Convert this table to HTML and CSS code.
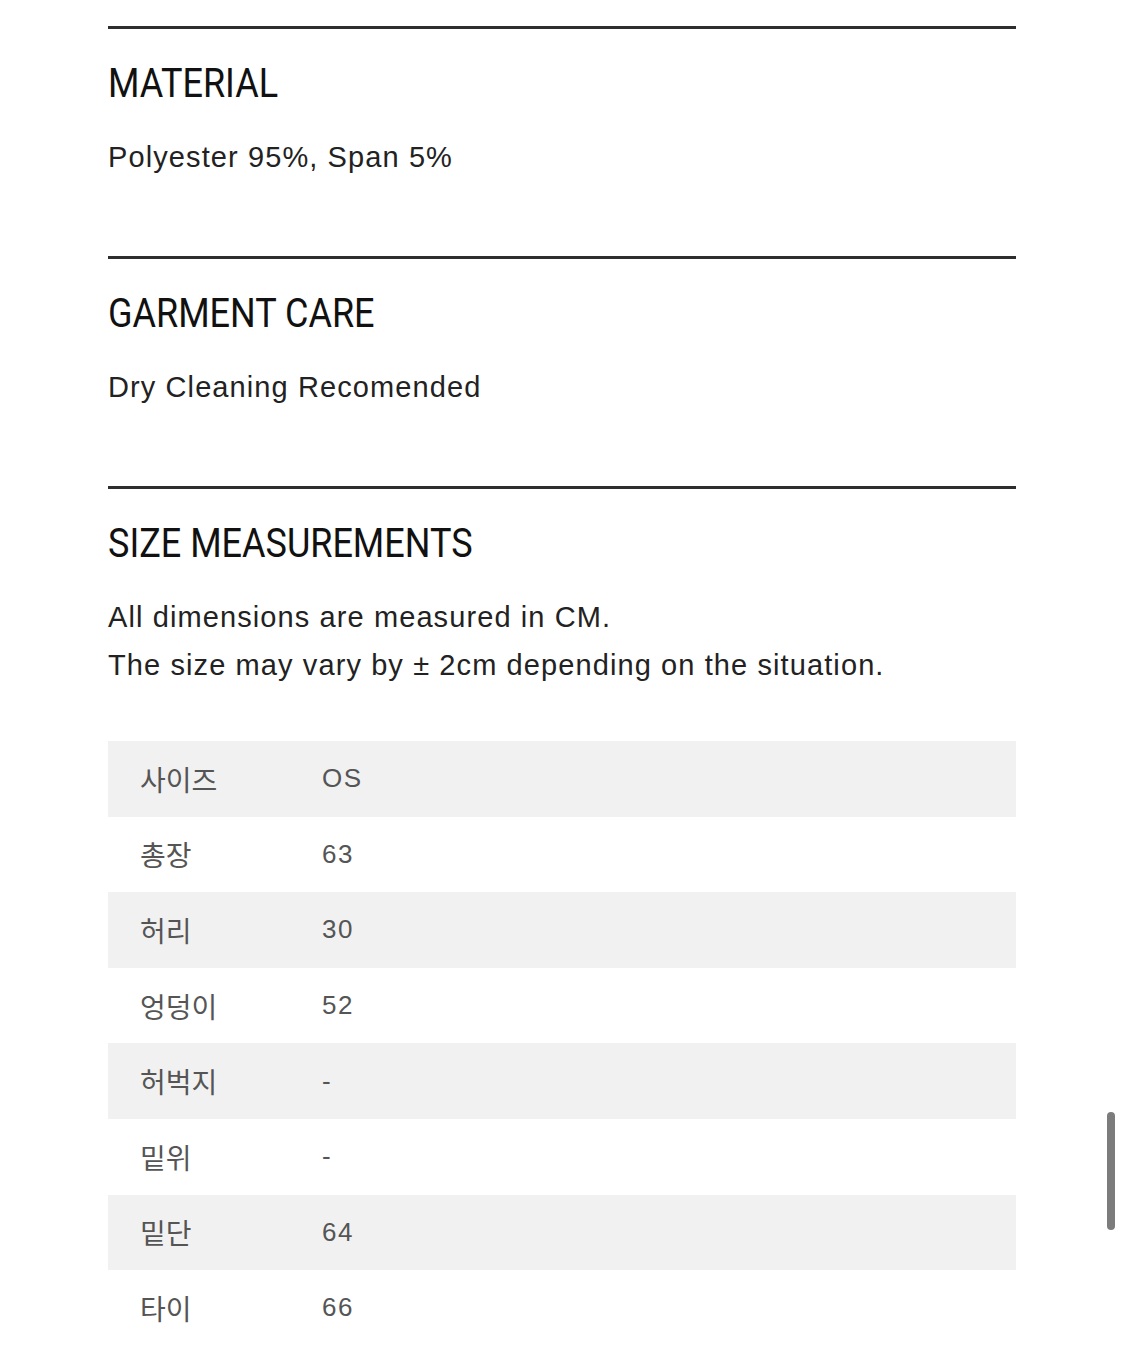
FILE: index.html
```html
<!DOCTYPE html>
<html lang="en">
<head>
<meta charset="utf-8">
<title>Product details</title>
<link rel="stylesheet" href="styles.css">
</head>
<body>
<main class="page">
  <section class="section">
    <h2 class="heading"><span>MATERIAL</span></h2>
    <p class="text">Polyester 95%, Span 5%</p>
  </section>
  <section class="section">
    <h2 class="heading"><span>GARMENT CARE</span></h2>
    <p class="text">Dry Cleaning Recomended</p>
  </section>
  <section class="section section-last">
    <h2 class="heading"><span>SIZE MEASUREMENTS</span></h2>
    <p class="text">All dimensions are measured in CM.<br>The size may vary by ± 2cm depending on the situation.</p>
    <div class="size-table">
      <div class="row shade"><span class="label">사이즈</span><span class="value">OS</span></div>
      <div class="row"><span class="label">총장</span><span class="value">63</span></div>
      <div class="row shade"><span class="label">허리</span><span class="value">30</span></div>
      <div class="row"><span class="label">엉덩이</span><span class="value">52</span></div>
      <div class="row shade"><span class="label">허벅지</span><span class="value">-</span></div>
      <div class="row"><span class="label">밑위</span><span class="value">-</span></div>
      <div class="row shade"><span class="label">밑단</span><span class="value">64</span></div>
      <div class="row"><span class="label">타이</span><span class="value">66</span></div>
    </div>
  </section>
</main>
<div class="scrollbar"></div>
</body>
</html>
```
FILE: styles.css
```css
html, body {
  margin: 0;
  padding: 0;
  background: #ffffff;
}
body {
  width: 1125px;
  height: 1350px;
  overflow: hidden;
  position: relative;
  font-family: "Liberation Sans", Arial, sans-serif;
}
.page {
  width: 908px;
  margin-left: 108px;
  padding-top: 26px;
}
.section {
  border-top: 3px solid #2e2e2e;
  padding: 34px 0 75px;
}
.section-last {
  padding-bottom: 0;
}
.heading {
  margin: 0;
  height: 42px;
  font-family: Roboto, "Liberation Sans", sans-serif;
  font-weight: 400;
  font-size: 40px;
  line-height: 42px;
  color: #111111;
  white-space: nowrap;
}
.heading span {
  display: inline-block;
  transform: scaleX(0.9);
  transform-origin: left center;
}
.text {
  margin: 28px 0 0;
  font-size: 29px;
  line-height: 48px;
  letter-spacing: 1.1px;
  color: #222222;
}
.size-table {
  margin-top: 52px;
}
.row {
  display: flex;
  align-items: center;
  height: 75.6px;
  padding-left: 32px;
}
.shade {
  background: #f1f1f1;
}
.label {
  width: 182px;
  font-family: "Noto Sans CJK KR", "Noto Sans", sans-serif;
  font-size: 28px;
  color: #555555;
}
.value {
  font-family: "Liberation Sans", Arial, sans-serif;
  font-size: 26px;
  letter-spacing: 1.5px;
  color: #555555;
}
.scrollbar {
  position: absolute;
  left: 1107px;
  top: 1112px;
  width: 8px;
  height: 118px;
  border-radius: 4px;
  background: #7c7c7c;
}
```
